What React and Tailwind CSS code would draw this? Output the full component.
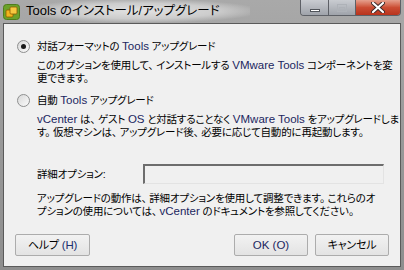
import React, { useState } from "react";

const jp = {
  fontFamily: '"Liberation Sans", "Noto Sans CJK JP", sans-serif',
  fontFeatureSettings: '"palt"',
};

function Latin({ children }) {
  return <span className="text-[11.5px] text-[#1b2660] tracking-normal">{children}</span>;
}

function Radio({ checked, onClick }) {
  return (
    <button
      onClick={onClick}
      className="w-[13px] h-[13px] rounded-full border border-[#8e8f8f] bg-gradient-to-br from-[#d8d8d8] to-[#fbfbfb] flex items-center justify-center shrink-0"
    >
      {checked && <span className="w-[5px] h-[5px] rounded-full bg-[#1a1a1a]" />}
    </button>
  );
}

function WinButton({ children, className = "" }) {
  return (
    <button
      className={
        "h-[100%] flex items-center justify-center border-r border-[#5d6066] last:border-r-0 " +
        className
      }
    >
      {children}
    </button>
  );
}

function Btn({ children, className = "" }) {
  return (
    <button
      className={
        "h-[22px] border border-[#acacac] bg-gradient-to-b from-[#f2f2f2] to-[#e3e3e3] rounded-[2px] text-[11px] text-black flex items-center justify-center " +
        className
      }
      style={jp}
    >
      {children}
    </button>
  );
}

function Lines({ lines, className = "" }) {
  return (
    <div className={"whitespace-nowrap " + className}>
      {lines.map((l, i) => (
        <div key={i} className="h-[13px]">
          {l}
        </div>
      ))}
    </div>
  );
}

export default function App() {
  const [mode, setMode] = useState("interactive");

  return (
    <div
      className="w-[404px] h-[270px] flex flex-col bg-gradient-to-b from-[#a9a9a9] via-[#999999] to-[#8e8e8e] overflow-hidden"
      style={jp}
    >
      {/* title bar */}
      <div className="h-[23px] flex items-start shrink-0 relative">
        <div className="absolute left-[30px] top-0 w-[220px] h-[22px] bg-[radial-gradient(ellipse_at_center,#e2e2e2_0%,#cccccc_50%,transparent_78%)]" />
        <svg className="mt-[4px] ml-[3px] relative" width="17" height="16" viewBox="0 0 17 16">
          <rect x="0.5" y="0.5" width="16" height="15" rx="3" fill="#6ca22a" stroke="#4f7d1a" />
          <rect x="3" y="6" width="7" height="7" rx="1" fill="#f2b51c" stroke="#8a5a00" strokeWidth="0.8" />
          <rect x="7" y="3" width="7" height="7" rx="1" fill="#f7c840" stroke="#8a5a00" strokeWidth="0.8" />
        </svg>
        <span className="relative ml-[6px] mt-[3px] text-[12.5px] leading-[16px] text-black">
          <span className="text-[13px]">Tools</span> のインストール/アップグレード
        </span>
        <div className="ml-auto mr-[3px] h-[16px] flex rounded-b-[4px] border border-t-0 border-[#5d6066] overflow-hidden">
          <WinButton className="w-[28px] bg-gradient-to-b from-[#c9ccd1] to-[#9fa3aa]">
            <span className="w-[10px] h-[3px] bg-white border border-[#50545a] mt-[5px]" />
          </WinButton>
          <WinButton className="w-[27px] bg-gradient-to-b from-[#c9ccd1] to-[#9fa3aa]">
            <span className="w-[10px] h-[8px] border border-[#aeb2b8] bg-transparent flex items-center justify-center">
              <span className="w-[6px] h-[3px] border border-[#aeb2b8] mt-[1px]" />
            </span>
          </WinButton>
          <WinButton className="w-[44px] bg-gradient-to-b from-[#e5a08d] via-[#cb4d33] to-[#b8321c]">
            <svg width="14" height="11" viewBox="0 0 14 11">
              <path d="M2 1 L12 10 M12 1 L2 10" stroke="#3a2a2a" strokeWidth="4" strokeLinecap="round" />
              <path d="M2 1 L12 10 M12 1 L2 10" stroke="#ffffff" strokeWidth="2.2" strokeLinecap="round" />
            </svg>
          </WinButton>
        </div>
      </div>

      {/* client area */}
      <div className="mx-[3px] h-[244px] border border-[#5a5a5a] bg-[#f0f0f0] text-[10.5px] leading-[13px] tracking-[-0.2px] text-black flex flex-col pt-[16px] pl-[13px] pr-[14px]">
        <div className="flex items-center gap-[7px] h-[13px] whitespace-nowrap">
          <Radio checked={mode === "interactive"} onClick={() => setMode("interactive")} />
          <span>
            対話フォーマットの <Latin>Tools</Latin> アップグレード
          </span>
        </div>
        <Lines
          className="ml-[20px] mt-[6px]"
          lines={[
            <>このオプションを使用して、 インストールする <Latin>VMware Tools</Latin> コンポーネントを変</>,
            <>更できます。</>,
          ]}
        />

        <div className="flex items-center gap-[7px] h-[13px] mt-[9px] whitespace-nowrap">
          <Radio checked={mode === "auto"} onClick={() => setMode("auto")} />
          <span>
            自動 <Latin>Tools</Latin> アップグレード
          </span>
        </div>
        <Lines
          className="ml-[20px] mt-[6px]"
          lines={[
            <><Latin>vCenter</Latin> は、 ゲスト <Latin>OS</Latin> と対話することなく <Latin>VMware Tools</Latin> をアップグレードしま</>,
            <>す。 仮想マシンは、 アップグレード後、 必要に応じて自動的に再起動します。</>,
          ]}
        />

        <div className="ml-[20px] mt-[25px] flex items-center h-[20px]">
          <span className="w-[106px]">詳細オプション:</span>
          <input
            disabled
            className="w-[241px] h-[20px] border-t-2 border-l-2 border-t-[#6d6d6d] border-l-[#6d6d6d] border-r border-b border-r-[#e3e3e3] border-b-[#e3e3e3] bg-[#f0f0f0]"
          />
        </div>
        <Lines
          className="ml-[20px] mt-[8px]"
          lines={[
            <>アップグレードの動作は、 詳細オプションを使用して調整できます。 これらのオ</>,
            <>プションの使用については、 <Latin>vCenter</Latin> のドキュメントを参照してください。</>,
          ]}
        />

        <div className="flex mt-auto mb-[10px] -ml-[2px] -mr-[3px]">
          <Btn className="w-[75px]">
            ヘルプ <span className="text-[11.5px] text-[#1b3070] ml-[3px]">(H)</span>
          </Btn>
          <Btn className="w-[74px] ml-auto">
            <Latin>OK (O)</Latin>
          </Btn>
          <Btn className="w-[74px] ml-[7px]">キャンセル</Btn>
        </div>
      </div>
    </div>
  );
}
